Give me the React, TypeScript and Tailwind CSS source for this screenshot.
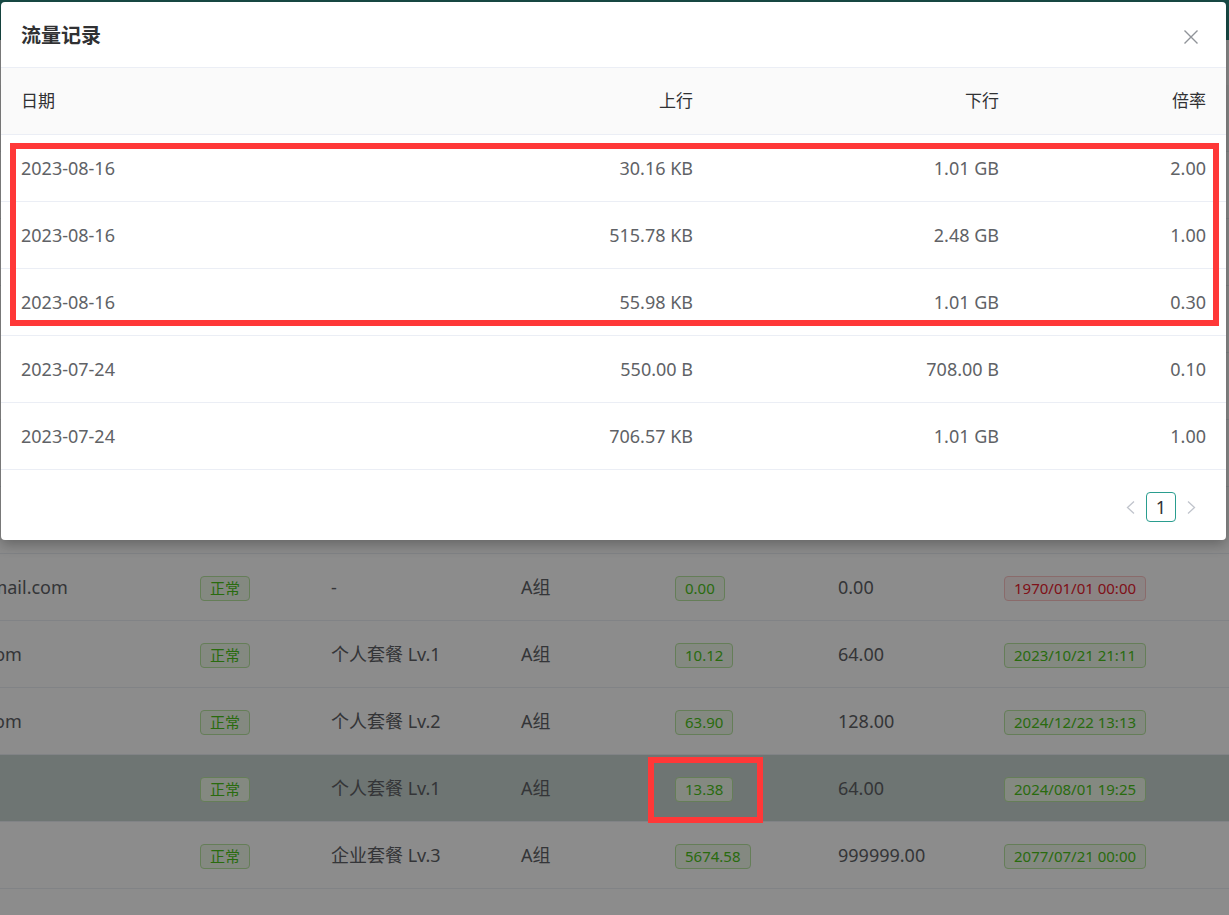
type Traffic = { date: string; up: string; down: string; rate: string };

const records: Traffic[] = [
  { date: "2023-08-16", up: "30.16 KB", down: "1.01 GB", rate: "2.00" },
  { date: "2023-08-16", up: "515.78 KB", down: "2.48 GB", rate: "1.00" },
  { date: "2023-08-16", up: "55.98 KB", down: "1.01 GB", rate: "0.30" },
  { date: "2023-07-24", up: "550.00 B", down: "708.00 B", rate: "0.10" },
  { date: "2023-07-24", up: "706.57 KB", down: "1.01 GB", rate: "1.00" },
];

type User = {
  email: string;
  plan: string;
  balance: string;
  amount: string;
  expire: string;
  expired?: boolean;
  hover?: boolean;
};

// rows of the user list behind the dialog (the first ones are hidden by it)
const users: User[] = [
  { email: "admin@163.com", plan: "个人套餐 Lv.1", balance: "0.00", amount: "64.00", expire: "2023/09/01 00:00" },
  { email: "test01@qq.com", plan: "个人套餐 Lv.2", balance: "12.00", amount: "128.00", expire: "2023/11/11 10:20" },
  { email: "demo@gmail.com", plan: "-", balance: "0.00", amount: "0.00", expire: "1970/01/01 00:00", expired: true },
  { email: "user88@qq.com", plan: "个人套餐 Lv.1", balance: "3.20", amount: "64.00", expire: "2024/01/05 08:00" },
  { email: "hello@163.com", plan: "企业套餐 Lv.3", balance: "100.00", amount: "999.00", expire: "2025/05/05 12:00" },
  { email: "abc@qq.com", plan: "个人套餐 Lv.1", balance: "8.00", amount: "64.00", expire: "2023/12/12 12:12" },
  { email: "zhangwei19980512@gmail.com", plan: "-", balance: "0.00", amount: "0.00", expire: "1970/01/01 00:00", expired: true },
  { email: "lixiaolong20201@163.com", plan: "个人套餐 Lv.1", balance: "10.12", amount: "64.00", expire: "2023/10/21 21:11" },
  { email: "zhouyangli2021@163.com", plan: "个人套餐 Lv.2", balance: "63.90", amount: "128.00", expire: "2024/12/22 13:13" },
  { email: "test@qq.com", plan: "个人套餐 Lv.1", balance: "13.38", amount: "64.00", expire: "2024/08/01 19:25", hover: true },
  { email: "a@qq.com", plan: "企业套餐 Lv.3", balance: "5674.58", amount: "999999.00", expire: "2077/07/21 00:00" },
];

function Tag({ children, danger }: { children: React.ReactNode; danger?: boolean }) {
  return (
    <span
      className={
        danger
          ? "inline-block rounded-[4px] border border-[#fbc4c4] bg-[#fef0f0] px-[9px] text-[15px] leading-[23px] text-[#e8202e]"
          : "inline-block rounded-[4px] border border-[#b8e6a0] bg-[#f0f9eb] px-[9px] text-[15px] leading-[23px] text-[#4cc41a]"
      }
    >
      {children}
    </span>
  );
}

export default function App() {
  return (
    <div className="relative h-[915px] w-[1229px] overflow-hidden bg-white font-['Noto_Sans','Noto_Sans_CJK_SC',sans-serif] text-[#606266]">
      {/* page behind the dialog */}
      <div className="h-[40px] bg-[#2c8a81]" />
      <div className="h-[45px]" />
      <div className="-ml-[200px]">
        <div className="grid h-[67px] grid-cols-[400px_131px_190px_154px_163px_166px_1fr] items-center border-b border-[#ebeef5] bg-[#fafafa] text-[17px] text-[#303133]">
          <span>邮箱</span>
          <span>状态</span>
          <span>订阅</span>
          <span>权限组</span>
          <span>余额</span>
          <span>总额</span>
          <span>到期时间</span>
        </div>
        {users.map((u, i) => (
          <div
            key={i}
            className={
              "grid h-[67px] grid-cols-[400px_131px_190px_154px_163px_166px_1fr] items-center border-b border-[#ebeef5] text-[18px] " +
              (u.hover ? "bg-[#c8d5d1]" : "bg-white")
            }
          >
            <span className="whitespace-nowrap">{u.email}</span>
            <span>
              <Tag>正常</Tag>
            </span>
            <span>{u.plan}</span>
            <span>A组</span>
            <span>
              <Tag>{u.balance}</Tag>
            </span>
            <span>{u.amount}</span>
            <span>
              <Tag danger={u.expired}>{u.expire}</Tag>
            </span>
          </div>
        ))}
      </div>

      {/* overlay */}
      <div className="absolute inset-0 bg-black/45" />

      {/* dialog */}
      <div className="absolute left-[1px] top-[2px] w-[1225px] rounded-[4px] bg-white shadow-[0_4px_14px_rgba(0,0,0,0.3)]">
        <div className="flex h-[66px] items-center justify-between border-b border-[#ebeef5] pl-5 pr-[28px] pt-[3px]">
          <h2 className="text-[20px] font-bold text-[#303133]">流量记录</h2>
          <svg width="14" height="14" viewBox="0 0 14 14" className="mt-[1px]">
            <path d="M0.5 0.5L13.5 13.5M13.5 0.5L0.5 13.5" stroke="#909399" strokeWidth="1.4" fill="none" />
          </svg>
        </div>

        <div className="grid h-[67px] grid-cols-[336px_336px_306px_207px] items-center border-b border-[#ebeef5] bg-[#fafafa] px-5 text-[17px] text-[#303133]">
          <span>日期</span>
          <span className="text-right">上行</span>
          <span className="text-right">下行</span>
          <span className="text-right">倍率</span>
        </div>
        {records.map((r, i) => (
          <div
            key={i}
            className="grid h-[67px] grid-cols-[336px_336px_306px_207px] items-center border-b border-[#ebeef5] px-5 text-[18px] text-[#606266]"
          >
            <span>{r.date}</span>
            <span className="text-right">{r.up}</span>
            <span className="text-right">{r.down}</span>
            <span className="text-right">{r.rate}</span>
          </div>
        ))}

        <div className="flex items-center justify-end gap-[11px] pb-[18px] pr-[30px] pt-[22px]">
          <svg width="9" height="13" viewBox="0 0 9 13">
            <path d="M8 0.5L1.5 6.5L8 12.5" stroke="#c0c4cc" strokeWidth="1.3" fill="none" />
          </svg>
          <span className="flex h-[30px] w-[30px] items-center justify-center rounded-[4px] border border-[#2a9d8f] text-[18px] text-[#303133]">
            1
          </span>
          <svg width="9" height="13" viewBox="0 0 9 13">
            <path d="M1 0.5L7.5 6.5L1 12.5" stroke="#c0c4cc" strokeWidth="1.3" fill="none" />
          </svg>
        </div>
      </div>

      {/* annotation boxes */}
      <div className="absolute left-[10px] top-[143px] h-[183px] w-[1209px] border-[6px] border-[#ff3838]" />
      <div className="absolute left-[648px] top-[757px] h-[66px] w-[115px] border-[6px] border-[#ff3838]" />
    </div>
  );
}
